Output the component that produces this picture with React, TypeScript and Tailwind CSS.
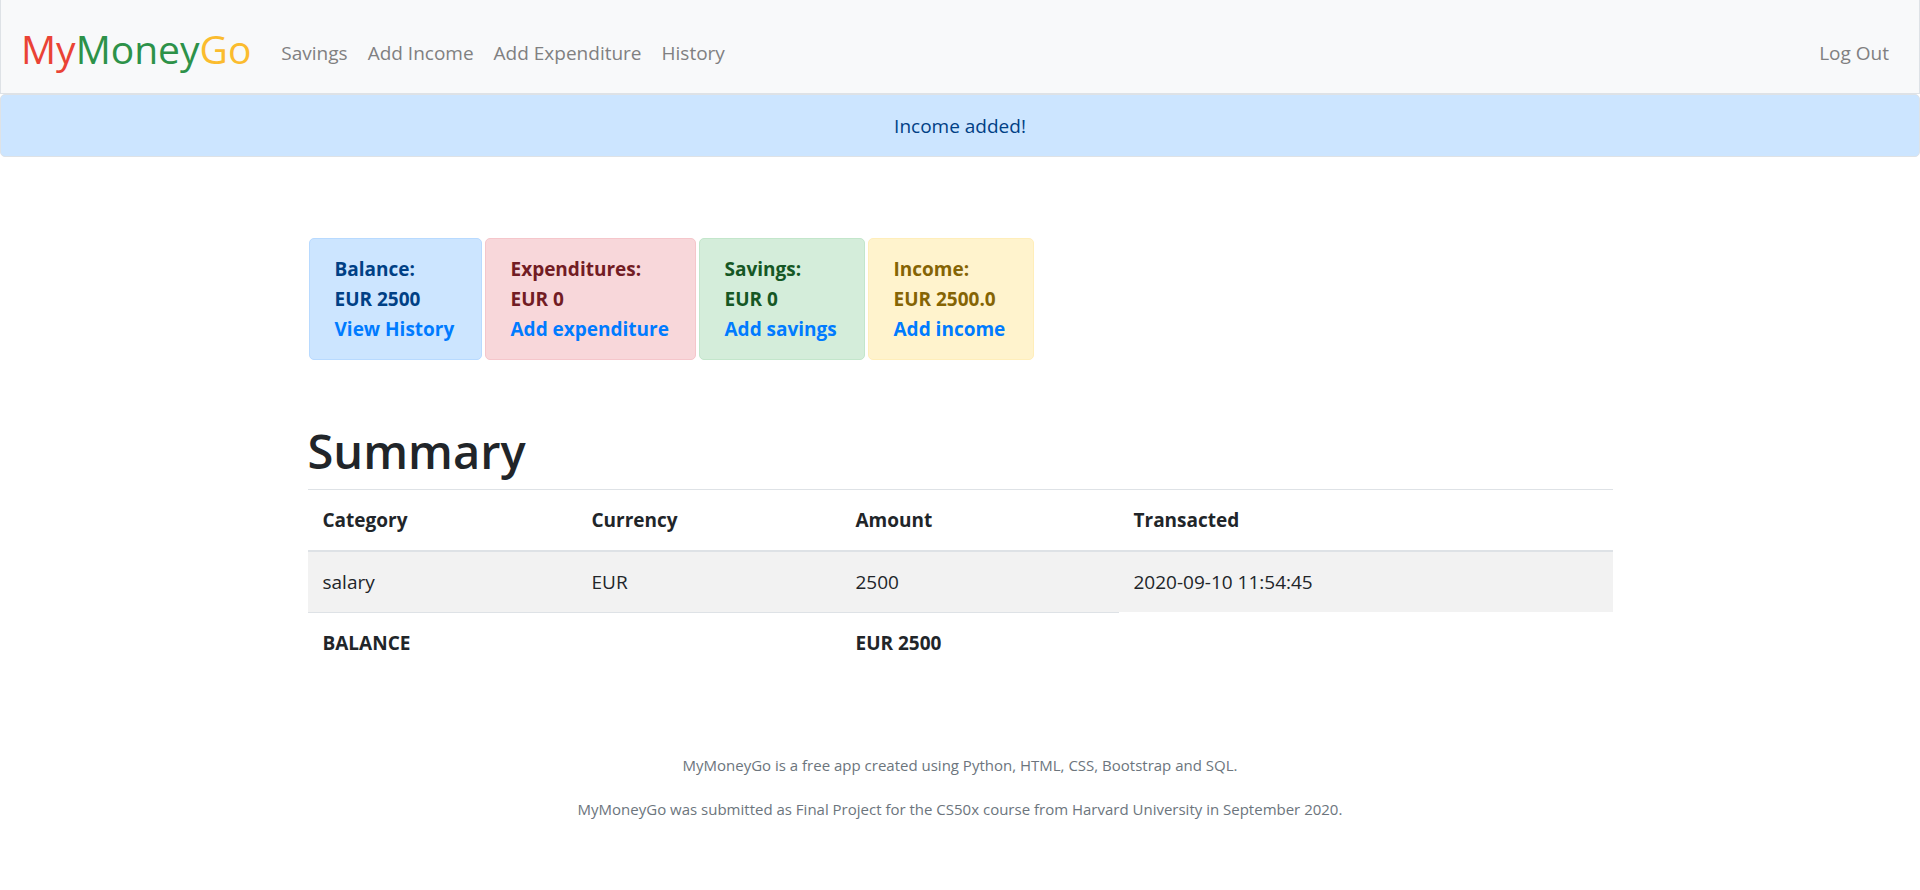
import React from "react";

const navLinks = ["Savings", "Add Income", "Add Expenditure", "History"];

const cards = [
  { label: "Balance:", value: "EUR 2500", link: "View History", style: "w-[173px] bg-[#cce5ff] border-[#b8daff] text-[#004085]" },
  { label: "Expenditures:", value: "EUR 0", link: "Add expenditure", style: "w-[211px] bg-[#f8d7da] border-[#f5c6cb] text-[#721c24]" },
  { label: "Savings:", value: "EUR 0", link: "Add savings", style: "w-[166px] bg-[#d4edda] border-[#c3e6cb] text-[#155724]" },
  { label: "Income:", value: "EUR 2500.0", link: "Add income", style: "w-[166px] bg-[#fff3cd] border-[#ffeeba] text-[#856404]" },
];

function NavLink({ children }: { children: React.ReactNode }) {
  return (
    <a href="#" className="px-[10px] py-2 text-[#808081]">
      {children}
    </a>
  );
}

export default function App() {
  return (
    <div className="min-h-screen bg-white font-['Open_Sans','Noto_Sans',sans-serif] text-[19px] leading-[30px] text-[#212529]">
      <nav className="flex h-[94px] items-center border border-t-0 border-[#dee2e6] bg-[#f8f9fa] px-5">
        <a href="#" className="mr-5 pt-1 text-[39px] leading-[56px]">
          <span className="text-[#ea4335]">My</span>
          <span className="text-[#2d9249]">Money</span>
          <span className="text-[#fbbc2e]">Go</span>
        </a>
        <div className="flex flex-1 pt-3">
          {navLinks.map((name) => (
            <NavLink key={name}>{name}</NavLink>
          ))}
        </div>
        <div className="pt-3">
          <NavLink>Log Out</NavLink>
        </div>
      </nav>

      <header role="alert" className="rounded-[5px] border border-[#dee2e6] bg-[#cce5ff] px-6 pt-4 pb-[15px] text-center text-[#004085]">
        Income added!
      </header>

      <main className="mx-auto max-w-[1305px] pt-[81px]">
        <div className="flex flex-wrap gap-[3px] px-px">
          {cards.map((card) => (
            <div key={card.label} className={`rounded-[5px] border px-[25px] py-[15px] font-bold whitespace-nowrap ${card.style}`}>
              <p>{card.label}</p>
              <p>{card.value}</p>
              <a href="#" className="block text-[#007bff]">{card.link}</a>
            </div>
          ))}
        </div>

        <h1 className="mt-[61px] mb-2 text-[47px] leading-[60px] font-semibold">Summary</h1>

        <table className="w-full table-fixed border-separate border-spacing-0 text-left">
          <thead>
            <tr>
              <th className="w-[269px] border-t border-b-2 border-[#dee2e6] p-[15px] font-bold">Category</th>
              <th className="w-[264px] border-t border-b-2 border-[#dee2e6] p-[15px] font-bold">Currency</th>
              <th className="w-[278px] border-t border-b-2 border-[#dee2e6] p-[15px] font-bold">Amount</th>
              <th className="border-t border-b-2 border-[#dee2e6] p-[15px] font-bold">Transacted</th>
            </tr>
          </thead>
          <tbody>
            <tr className="bg-[#f2f2f2]">
              <td className="p-[15px]">salary</td>
              <td className="p-[15px]">EUR</td>
              <td className="p-[15px]">2500</td>
              <td className="p-[15px]">2020-09-10 11:54:45</td>
            </tr>
            <tr className="font-bold">
              <td className="border-t border-[#dee2e6] p-[15px]">BALANCE</td>
              <td className="border-t border-[#dee2e6] p-[15px]"></td>
              <td className="border-t border-[#dee2e6] p-[15px]">EUR 2500</td>
            </tr>
          </tbody>
        </table>
      </main>

      <footer className="mt-20 text-center text-[15px] leading-6 text-[#6c757d]">
        <p>MyMoneyGo is a free app created using Python, HTML, CSS, Bootstrap and SQL.</p>
        <p className="mt-5">
          MyMoneyGo was submitted as Final Project for the CS50x course from Harvard University in September 2020.
        </p>
      </footer>
    </div>
  );
}
